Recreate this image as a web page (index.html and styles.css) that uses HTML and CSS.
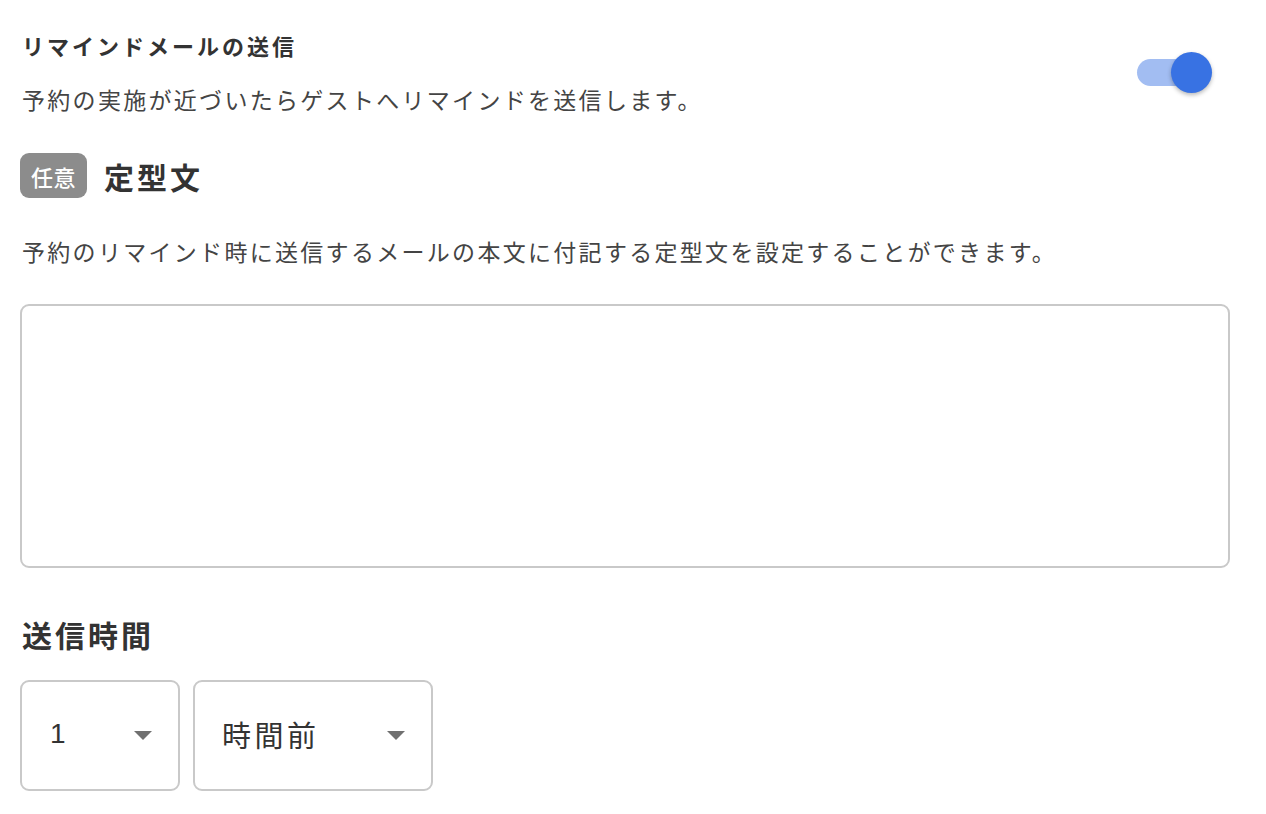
FILE: index.html
```html
<!DOCTYPE html>
<html lang="ja">
<head>
<meta charset="utf-8">
<link rel="stylesheet" href="styles.css">
</head>
<body>
<div class="page">
  <div class="setting-row">
    <div class="setting-text">
      <div class="setting-title">リマインドメールの送信</div>
      <div class="desc desc-first">予約の実施が近づいたらゲストへリマインドを送信します。</div>
    </div>
    <div class="toggle">
      <span class="toggle-track"></span>
      <span class="toggle-knob"></span>
    </div>
  </div>

  <div class="section-head">
    <span class="badge">任意</span>
    <span class="heading">定型文</span>
  </div>
  <div class="desc desc-second">予約のリマインド時に送信するメールの本文に付記する定型文を設定することができます。</div>
  <div class="textarea"></div>

  <div class="heading heading-time">送信時間</div>
  <div class="selects">
    <div class="select select-num">
      <span class="select-value">1</span>
      <span class="caret"></span>
    </div>
    <div class="select select-unit">
      <span class="select-value unit">時間前</span>
      <span class="caret"></span>
    </div>
  </div>
</div>
</body>
</html>
```
FILE: styles.css
```css
* { box-sizing: border-box; }
html, body { margin: 0; padding: 0; background: #fff; }
body {
  font-family: "Noto Sans CJK JP", "Noto Sans", sans-serif;
  color: #333;
}
.page {
  padding: 30px 36px 0 20px;
  width: 1266px;
}
.setting-row {
  display: flex;
  align-items: center;
  justify-content: space-between;
}
.setting-text { padding-left: 2px; }
.setting-title {
  font-size: 22px;
  line-height: 30px;
  font-weight: 700;
  letter-spacing: 3px;
  color: #333;
}
.desc {
  font-size: 23px;
  line-height: 30px;
  letter-spacing: 2.3px;
  color: #444;
}
.desc-first { margin-top: 24px; }
.toggle {
  position: relative;
  width: 75px;
  height: 41px;
  margin-right: 18px;
}
.toggle-track {
  position: absolute;
  left: 0;
  top: 7px;
  width: 62px;
  height: 27px;
  border-radius: 14px;
  background: #a2bdf2;
}
.toggle-knob {
  position: absolute;
  right: 0;
  top: 0;
  width: 41px;
  height: 41px;
  border-radius: 50%;
  background: #3872e3;
  box-shadow: 0 2px 4px rgba(0,0,0,0.28);
}
.section-head {
  display: flex;
  align-items: center;
  gap: 17px;
  margin-top: 39px;
  height: 45px;
}
.badge {
  display: flex;
  align-items: center;
  justify-content: center;
  width: 67px;
  height: 45px;
  border-radius: 9px;
  background: #8c8c8c;
  color: #fff;
  font-size: 22px;
  letter-spacing: 0.5px;
  font-weight: 500;
}
.heading {
  font-size: 30px;
  line-height: 40px;
  font-weight: 700;
  letter-spacing: 3px;
  color: #333;
}
.desc-second {
  margin-top: 38px;
  padding-left: 2px;
}
.textarea {
  margin-top: 38px;
  width: 1210px;
  height: 264px;
  border: 2px solid #c9c9c9;
  border-radius: 9px;
}
.heading-time {
  margin-top: 46px;
  padding-left: 2px;
}
.selects {
  display: flex;
  gap: 13px;
  margin-top: 26px;
}
.select {
  display: flex;
  align-items: center;
  justify-content: space-between;
  height: 111px;
  border: 2px solid #c9c9c9;
  border-radius: 9px;
  padding: 0 26px 0 28px;
}
.select-num { width: 160px; }
.select-unit { width: 240px; padding-left: 27px; }
.select-value {
  font-size: 28px;
  line-height: 40px;
  color: #333;
  font-family: "Liberation Sans", "Noto Sans CJK JP", sans-serif;
  margin-top: -4px;
}
.select-value.unit {
  font-family: "Noto Sans CJK JP", sans-serif;
  font-size: 29px;
  letter-spacing: 3.5px;
}
.caret {
  width: 0;
  height: 0;
  border-left: 9.5px solid transparent;
  border-right: 9.5px solid transparent;
  border-top: 9px solid #707070;
}
```
